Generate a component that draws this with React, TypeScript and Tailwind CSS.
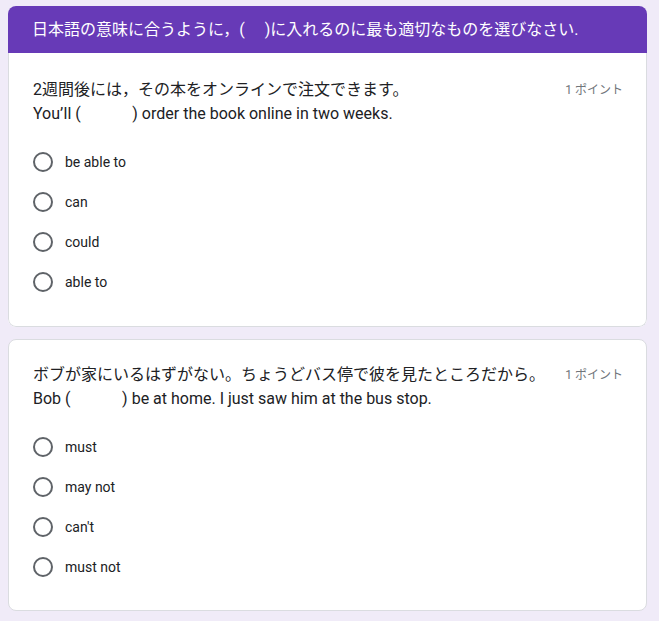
const questions = [
  {
    ja: '2週間後には，その本をオンラインで注文できます。',
    en: "You’ll (             ) order the book online in two weeks.",
    options: ['be able to', 'can', 'could', 'able to'],
  },
  {
    ja: 'ボブが家にいるはずがない。ちょうどバス停で彼を見たところだから。',
    en: 'Bob (             ) be at home. I just saw him at the bus stop.',
    options: ['must', 'may not', "can't", 'must not'],
  },
];

const jpFont = "font-['Roboto','Noto_Sans_CJK_JP',sans-serif]";

const Radio = ({ label }: { label: string }) => (
  <label className="flex items-center h-10 cursor-pointer">
    <span className="w-5 h-5 rounded-full border-2 border-[#5f6368] shrink-0" />
    <span className="ml-3 text-[14px] text-[#202124]">{label}</span>
  </label>
);

export default function App() {
  return (
    <div className={`min-h-[621px] bg-[#f0ebf8] pt-[6px] pl-2 pr-3 pb-2 ${jpFont}`}>
      {/* Section header + first question */}
      <div className="rounded-lg overflow-hidden bg-white">
        <div className="h-[47px] bg-[#673ab7] flex items-center px-6 text-white text-[16px]">
          日本語の意味に合うように，(　 )に入れるのに最も適切なものを選びなさい.
        </div>
        <Question q={questions[0]} attached />
      </div>

      <div className="mt-3 rounded-lg bg-white border border-[#dadce0]">
        <Question q={questions[1]} />
      </div>
    </div>
  );
}

const Question = ({
  q,
  attached = false,
}: {
  q: (typeof questions)[number];
  attached?: boolean;
}) => (
  <div
    className={
      attached
        ? 'border-x border-b border-[#dadce0] rounded-b-lg pl-6 pr-[23px] pt-[25px] pb-6'
        : 'pl-6 pr-[23px] pt-[23px] pb-[23px]'
    }
  >
    <div className="flex justify-between">
      <div className="text-[16px] leading-6 text-[#202124]">
        <div>{q.ja}</div>
        <div className="whitespace-pre">{q.en}</div>
      </div>
      <div className="text-[12px] leading-6 text-[#70757a] shrink-0 ml-4">1 ポイント</div>
    </div>
    <div className="mt-4 flex flex-col">
      {q.options.map((o) => (
        <Radio key={o} label={o} />
      ))}
    </div>
  </div>
);
